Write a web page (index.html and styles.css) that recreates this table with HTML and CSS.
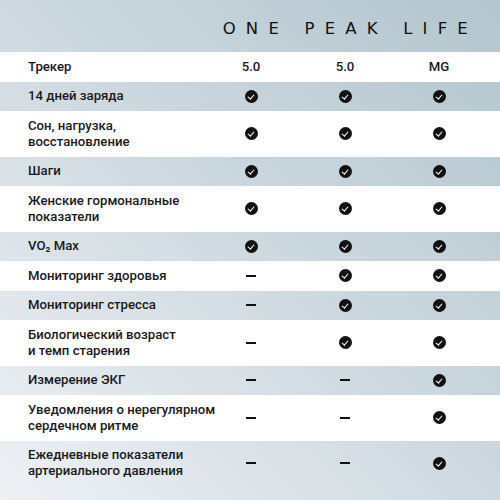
FILE: index.html
```html
<!DOCTYPE html>
<html lang="ru">
<head>
<meta charset="utf-8">
<link rel="stylesheet" href="styles.css">
</head>
<body>
<div class="page">
  <header class="head"><span class="logo">ONE PEAK LIFE</span></header>
  <div class="table">
    <div class="row white"><div class="label">Трекер</div><div class="cell">5.0</div><div class="cell">5.0</div><div class="cell">MG</div></div>
    <div class="row gray"><div class="label">14 дней заряда</div><div class="cell"><i class="ck"></i></div><div class="cell"><i class="ck"></i></div><div class="cell"><i class="ck"></i></div></div>
    <div class="row white"><div class="label">Сон, нагрузка,<br>восстановление</div><div class="cell"><i class="ck"></i></div><div class="cell"><i class="ck"></i></div><div class="cell"><i class="ck"></i></div></div>
    <div class="row gray"><div class="label">Шаги</div><div class="cell"><i class="ck"></i></div><div class="cell"><i class="ck"></i></div><div class="cell"><i class="ck"></i></div></div>
    <div class="row white"><div class="label">Женские гормональные<br>показатели</div><div class="cell"><i class="ck"></i></div><div class="cell"><i class="ck"></i></div><div class="cell"><i class="ck"></i></div></div>
    <div class="row gray"><div class="label">VO₂ Max</div><div class="cell"><i class="ck"></i></div><div class="cell"><i class="ck"></i></div><div class="cell"><i class="ck"></i></div></div>
    <div class="row white"><div class="label">Мониторинг здоровья</div><div class="cell"><i class="dash"></i></div><div class="cell"><i class="ck"></i></div><div class="cell"><i class="ck"></i></div></div>
    <div class="row gray"><div class="label">Мониторинг стресса</div><div class="cell"><i class="dash"></i></div><div class="cell"><i class="ck"></i></div><div class="cell"><i class="ck"></i></div></div>
    <div class="row white"><div class="label">Биологический возраст<br>и темп старения</div><div class="cell"><i class="dash"></i></div><div class="cell"><i class="ck"></i></div><div class="cell"><i class="ck"></i></div></div>
    <div class="row gray"><div class="label">Измерение ЭКГ</div><div class="cell"><i class="dash"></i></div><div class="cell"><i class="dash"></i></div><div class="cell"><i class="ck"></i></div></div>
    <div class="row white"><div class="label">Уведомления о нерегулярном<br>сердечном ритме</div><div class="cell"><i class="dash"></i></div><div class="cell"><i class="dash"></i></div><div class="cell"><i class="ck"></i></div></div>
    <div class="row gray"><div class="label">Ежедневные показатели<br>артериального давления</div><div class="cell"><i class="dash"></i></div><div class="cell"><i class="dash"></i></div><div class="cell"><i class="ck"></i></div></div>
  </div>
</div>
</body>
</html>
```
FILE: styles.css
```css
html, body {
  margin: 0;
  padding: 0;
}
body {
  width: 500px;
  height: 500px;
  overflow: hidden;
  background: linear-gradient(225deg, #b3c5ce 0%, #cbd7de 45%, #eef1f4 100%);
  font-family: Roboto, "Open Sans", sans-serif;
  color: #1a1a1a;
}
.page {
  width: 500px;
  height: 500px;
}
.head {
  height: 52px;
  display: flex;
  align-items: center;
  justify-content: flex-end;
  padding-right: 22px;
  box-sizing: border-box;
}
.logo {
  font-family: "DejaVu Sans", sans-serif;
  font-weight: 400;
  font-size: 16.5px;
  letter-spacing: 10.2px;
  color: #111;
  padding-top: 4px;
  white-space: nowrap;
}
.row {
  display: grid;
  grid-template-columns: 204px 94px 94px 94px;
  align-items: center;
  padding: 6.75px 0;
  font-size: 13.2px;
  line-height: 16px;
  font-weight: 500;
}
.row.white {
  background: #fff;
}
.row.gray {
  border-top: 1px solid rgba(255, 255, 255, 0.35);
  margin-top: -1px;
}
.label {
  padding-left: 28px;
  white-space: nowrap;
}
.cell {
  display: flex;
  justify-content: center;
  align-items: center;
}
.ck {
  display: block;
  width: 13px;
  height: 13px;
  border-radius: 50%;
  background: #111;
  position: relative;
}
.ck::after {
  content: "";
  position: absolute;
  left: 4.3px;
  top: 3.2px;
  width: 2.6px;
  height: 5px;
  border: solid #fff;
  border-width: 0 1.4px 1.4px 0;
  transform: rotate(40deg);
}
.dash {
  display: block;
  width: 10px;
  height: 2px;
  background: #111;
}
```
